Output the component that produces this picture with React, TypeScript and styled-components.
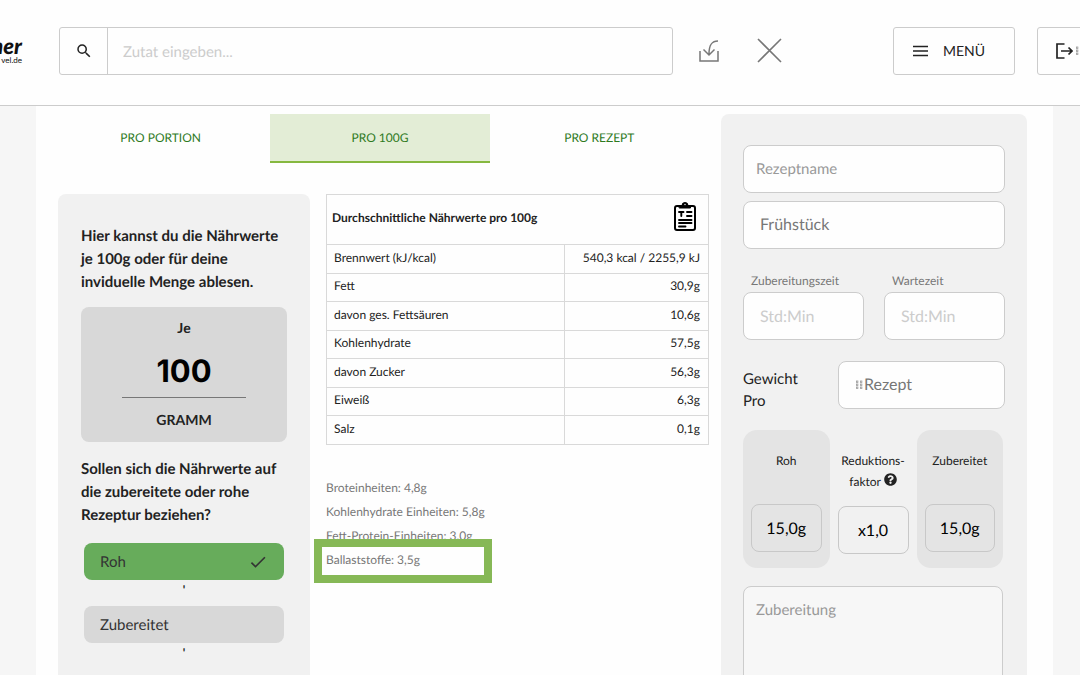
import React from "react";
import styled, { createGlobalStyle } from "styled-components";
import { MdSearch, MdCheck } from "react-icons/md";
import { FaQuestionCircle } from "react-icons/fa";

const GlobalStyle = createGlobalStyle`
  *, *::before, *::after { box-sizing: border-box; }
  body {
    margin: 0;
    background: #f6f6f6;
    color: #222;
    font: 15px/22px Lato, "Open Sans", sans-serif;
    text-rendering: geometricPrecision;
  }
  button, input, select, textarea { font: inherit; color: inherit; margin: 0; text-rendering: inherit; }
`;

const Page = styled.div`
  display: flex;
  flex-direction: column;
  height: 100vh;
  overflow: hidden;
`;

const Header = styled.header`
  display: flex;
  align-items: center;
  flex: none;
  height: 106px;
  padding-bottom: 4px;
  background: #fefefe;
  border-bottom: 1px solid #ccc;
`;

const Logo = styled.a`
  display: flex;
  flex-direction: column;
  align-items: flex-end;
  flex: none;
  width: 59px;
  padding-right: 37px;
  color: #111;
  text-decoration: none;
`;

const LogoName = styled.span`
  font-size: 22px;
  line-height: 18px;
  font-weight: 900;
  font-style: italic;
`;

const LogoDomain = styled.span`
  font-size: 8px;
  line-height: 10px;
`;

const Search = styled.form`
  display: flex;
  flex: 1;
  height: 48px;
  border: 1px solid #ccc;
  border-radius: 3px;
`;

const SearchButton = styled.button`
  display: grid;
  place-items: center;
  width: 48px;
  padding: 0;
  border: 0;
  border-right: 1px solid #ccc;
  background: none;
`;

const SearchInput = styled.input`
  flex: 1;
  min-width: 0;
  padding: 2px 15px 0;
  border: 0;
  background: none;
  &::placeholder { color: #ccc; opacity: 1; }
`;

const Actions = styled.div`
  display: flex;
  gap: 38px;
  padding: 0 111px 0 26px;
`;

const IconButton = styled.button`
  display: grid;
  place-items: center;
  padding: 0;
  border: 0;
  background: none;
  color: #777;
`;

const BoxButton = styled.button<{ $width: number; $gap: number }>`
  display: flex;
  align-items: center;
  gap: ${(p) => p.$gap}px;
  flex: none;
  width: ${(p) => p.$width}px;
  height: 48px;
  padding: 0 18px;
  border: 1px solid #ccc;
  border-radius: 3px;
  background: none;
  font-size: 14px;
`;

const HeaderButtons = styled.div`
  display: flex;
  gap: 22px;
  flex: none;
  margin-right: -37px;
`;

const Main = styled.main`
  display: flex;
  align-items: stretch;
  gap: 12px;
  flex: 1;
  margin: 0 27px 0 36px;
  padding: 8px 26px 0 15px;
  background: #fefefe;
`;

const Nutrition = styled.section`
  display: flex;
  flex-direction: column;
  flex: 1;
  min-width: 0;
`;

const Tabs = styled.div`
  display: flex;
`;

const Tab = styled.button<{ $active?: boolean }>`
  flex: 1;
  height: 49px;
  padding: 0;
  border: 0;
  border-bottom: 2px solid ${(p) => (p.$active ? "#86b840" : "transparent")};
  background: ${(p) => (p.$active ? "#e3edd6" : "none")};
  color: #2f7a1e;
  font-size: 12px;
`;

const Columns = styled.div`
  display: flex;
  gap: 16px;
  flex: 1;
  padding: 31px 0 0 7px;
`;

const Settings = styled.div`
  flex: none;
  width: 252px;
  padding: 31px 23px;
  border-radius: 8px 8px 0 0;
  background: #f1f1f1;
`;

const Question = styled.h2`
  margin: 0;
  font-size: 15px;
  line-height: 23px;
  font-weight: 700;
`;

const Amount = styled.label`
  display: flex;
  flex-direction: column;
  align-items: center;
  height: 135px;
  margin: 13px 0 16px;
  padding-top: 10px;
  border-radius: 8px;
  background: #d8d8d8;
  font-size: 14px;
  font-weight: 700;
`;

const AmountInput = styled.input`
  width: 124px;
  height: 59px;
  margin-bottom: 11px;
  padding: 6px 0 0;
  border: 0;
  border-bottom: 1px solid #777;
  background: none;
  color: #000;
  font: 700 31px Inter, sans-serif;
  text-align: center;
`;

const Options = styled.div`
  margin: 16px 3px 0;
`;

const Option = styled.label<{ $active?: boolean }>`
  display: flex;
  align-items: center;
  justify-content: space-between;
  height: 37px;
  padding: 0 16px;
  border-radius: 8px;
  background: ${(p) => (p.$active ? "#67ac5b" : "#d8d8d8")};
  color: #333;
`;

const HiddenRadio = styled.input`
  position: absolute;
  opacity: 0;
  pointer-events: none;
`;

const OptionNote = styled.div`
  height: 26px;
  font-size: 12px;
  line-height: 20px;
  font-weight: 700;
  text-align: center;
`;

const Facts = styled.div`
  flex: 1;
  min-width: 0;
`;

const FactsTable = styled.table`
  width: 100%;
  border-collapse: collapse;
  font-size: 12px;
  line-height: 16px;
  th, td { border: 1px solid #d9d9d9; }
  thead th { height: 50px; padding: 0 12px 3px 5px; text-align: left; }
  tbody th { width: 239px; padding: 0 7px 3px; font-weight: 400; text-align: left; }
  td { width: 144px; padding: 0 8px 3px; text-align: right; white-space: nowrap; }
  tbody tr { height: 28px; }
  tbody tr:nth-child(odd) { height: 29px; }
`;

const TableTitle = styled.div`
  display: flex;
  align-items: center;
  justify-content: space-between;
`;

const CopyButton = styled(IconButton)`
  color: #000;
  padding-bottom: 3px;
`;

const Units = styled.ul`
  margin: 31px 0 0;
  padding: 0;
  list-style: none;
  color: #777;
  font-size: 12px;
  line-height: 24px;
`;

const Unit = styled.li`
  position: relative;
`;

const Highlight = styled.span`
  position: absolute;
  left: -12px;
  top: -9px;
  width: 178px;
  height: 44px;
  border: 8px solid #86b856;
`;

const Recipe = styled.form`
  flex: none;
  width: 306px;
  padding: 31px 22px 0;
  border-radius: 8px 8px 0 0;
  background: #f1f1f1;
`;

const Field = styled.input`
  display: block;
  width: 100%;
  height: 48px;
  padding: 0 12px;
  border: 1px solid #ccc;
  border-radius: 8px;
  background: #fefefe;
  &::placeholder { color: #999; opacity: 1; }
`;

const SelectBox = styled.div`
  display: flex;
  align-items: center;
  flex: 1;
  height: 48px;
  padding: 0 16px;
  border: 1px solid #ccc;
  border-radius: 8px;
  background: #fefefe;
  color: #777;
`;

const Select = styled.select`
  flex: 1;
  padding: 0;
  border: 0;
  background: none;
  font-size: 16px;
  appearance: none;
`;

const Stack = styled.div`
  display: grid;
  gap: 8px;
`;

const Times = styled.div`
  display: grid;
  grid-template-columns: 1fr 1fr;
  gap: 20px;
  margin: 21px 0;
`;

const TimeLabel = styled.label`
  color: #777;
  font-size: 12px;
`;

const TimeName = styled.span`
  display: block;
  padding-left: 8px;
`;

const TimeField = styled(Field)`
  padding: 0 16px;
  font-size: 16px;
  &::placeholder { color: #ccc; }
`;

const WeightRow = styled.div`
  display: flex;
  align-items: flex-start;
  margin-bottom: 18px;
`;

const WeightLabel = styled.label`
  width: 95px;
  padding: 7px 30px 0 0;
`;

const Weights = styled.div`
  display: flex;
  gap: 8px;
  margin-right: 2px;
`;

const Weight = styled.label<{ $plain?: boolean }>`
  display: flex;
  flex-direction: column;
  align-items: center;
  flex: ${(p) => (p.$plain ? "0 0 71px" : "1")};
  min-width: 0;
  height: 138px;
  padding: 20px ${(p) => (p.$plain ? 0 : 8)}px 0;
  border-radius: 14px;
  background: ${(p) => (p.$plain ? "none" : "#e4e4e4")};
  font-size: 12px;
  line-height: 21px;
  text-align: center;
`;

const WeightName = styled.span<{ $plain?: boolean }>`
  height: ${(p) => (p.$plain ? 56 : 54)}px;
  white-space: nowrap;
`;

const WeightValue = styled.input`
  width: 100%;
  height: 48px;
  padding: 0;
  border: 1px solid #c8c8c8;
  border-radius: 8px;
  background: none;
  color: #000;
  font-size: 16px;
  text-align: center;
`;

const Preparation = styled.textarea`
  display: block;
  width: calc(100% - 2px);
  height: 200px;
  margin-top: 18px;
  padding: 12px;
  border: 1px solid #ccc;
  border-radius: 8px;
  background: #f7f7f7;
  resize: none;
  &::placeholder { color: #999; opacity: 1; }
`;

const ImportIcon = () => (
  <svg width="20" height="22" viewBox="0 0 20 22" fill="none" stroke="currentColor" strokeWidth="1.500">
    <path d="M1 11v10h18V11M19 1C12.500 1 10 5 10 14M4.500 9.500l5.500 5.500L15.500 9.500" />
  </svg>
);

const CrossIcon = () => (
  <svg width="25" height="25" viewBox="0 0 25 25" fill="none" stroke="currentColor" strokeWidth="1.600">
    <path d="M1 1l23 23M24 1L1 24" />
  </svg>
);

const MenuIcon = () => (
  <svg width="17" height="12" viewBox="0 0 17 12" stroke="currentColor" strokeWidth="1.500">
    <path d="M1 1.500h15M1 6h15M1 10.500h15" />
  </svg>
);

const LogoutIcon = () => (
  <svg width="17" height="16" viewBox="0 0 17 16" fill="none" stroke="currentColor" strokeWidth="1.700">
    <path d="M8.500 1H1v14h7.500M5 8h11M12.500 4.500L16 8l-3.500 3.500" />
  </svg>
);

const DotsIcon = () => (
  <svg width="9" height="10" viewBox="0 0 9 10" fill="none" stroke="#999" strokeWidth="0.800">
    {[1, 4, 7].map((y) => (
      <React.Fragment key={y}>
        <rect x="1.500" y={y} width="1.400" height="1.400" />
        <rect x="5.500" y={y} width="1.400" height="1.400" />
      </React.Fragment>
    ))}
  </svg>
);

const ClipboardIcon = () => (
  <svg width="22" height="29" viewBox="0 0 22 29" fill="none" stroke="currentColor" strokeLinecap="round">
    <rect x="1" y="4" width="20" height="24" rx="2" strokeWidth="2" />
    <path d="M5.500 3.500h2.500a3 3 0 0 1 6 0h2.500v2.500h-11z" fill="currentColor" strokeWidth="1" />
    <circle cx="11" cy="2.500" r="0.700" fill="#fff" stroke="none" />
    <path d="M5 10h4.500M7.300 10v4M13 10h4.500M13 14h4.500M5 18h12.500M5 21h12.500M5 24.500h6.500" strokeWidth="1.900" />
  </svg>
);

const rows = [
  ["Brennwert (kJ/kcal)", "540,3 kcal / 2255,9 kJ"],
  ["Fett", "30,9g"],
  ["davon ges. Fettsäuren", "10,6g"],
  ["Kohlenhydrate", "57,5g"],
  ["davon Zucker", "56,3g"],
  ["Eiweiß", "6,3g"],
  ["Salz", "0,1g"],
];

export default function App() {
  return (
    <Page>
      <GlobalStyle />
      <Header>
        <Logo href="#">
          <LogoName>ner</LogoName>
          <LogoDomain>vel.de</LogoDomain>
        </Logo>
        <Search>
          <SearchButton type="button" aria-label="Suchen"><MdSearch size={18} /></SearchButton>
          <SearchInput aria-label="Zutat" placeholder="Zutat eingeben..." />
        </Search>
        <Actions>
          <IconButton aria-label="Importieren"><ImportIcon /></IconButton>
          <IconButton aria-label="Leeren"><CrossIcon /></IconButton>
        </Actions>
        <HeaderButtons>
          <BoxButton $width={122} $gap={14}><MenuIcon />MENÜ</BoxButton>
          <BoxButton $width={80} $gap={2} aria-label="Abmelden">
            <LogoutIcon />
            <DotsIcon />
          </BoxButton>
        </HeaderButtons>
      </Header>
      <Main>
        <Nutrition>
          <Tabs role="tablist">
            <Tab role="tab">PRO PORTION</Tab>
            <Tab role="tab" aria-selected $active>PRO 100G</Tab>
            <Tab role="tab">PRO REZEPT</Tab>
          </Tabs>
          <Columns>
            <Settings>
              <Question>Hier kannst du die Nährwerte je 100g oder für deine inviduelle Menge ablesen.</Question>
              <Amount>
                Je
                <AmountInput defaultValue="100" />
                GRAMM
              </Amount>
              <Question>Sollen sich die Nährwerte auf die zubereitete oder rohe Rezeptur beziehen?</Question>
              <Options>
                <Option $active>
                  <HiddenRadio type="radio" name="state" defaultChecked />
                  Roh
                  <MdCheck size={20} />
                </Option>
                <OptionNote>'</OptionNote>
                <Option>
                  <HiddenRadio type="radio" name="state" />
                  Zubereitet
                </Option>
                <OptionNote>'</OptionNote>
              </Options>
            </Settings>
            <Facts>
              <FactsTable>
                <thead>
                  <tr>
                    <th colSpan={2}>
                      <TableTitle>
                        Durchschnittliche Nährwerte pro 100g
                        <CopyButton aria-label="Kopieren"><ClipboardIcon /></CopyButton>
                      </TableTitle>
                    </th>
                  </tr>
                </thead>
                <tbody>
                  {rows.map(([name, value]) => (
                    <tr key={name}>
                      <th scope="row">{name}</th>
                      <td>{value}</td>
                    </tr>
                  ))}
                </tbody>
              </FactsTable>
              <Units>
                <Unit>Broteinheiten: 4,8g</Unit>
                <Unit>Kohlenhydrate Einheiten: 5,8g</Unit>
                <Unit>Fett-Protein-Einheiten: 3,0g</Unit>
                <Unit>Ballaststoffe: 3,5g<Highlight /></Unit>
              </Units>
            </Facts>
          </Columns>
        </Nutrition>
        <Recipe>
          <Stack>
            <Field aria-label="Rezeptname" placeholder="Rezeptname" />
            <SelectBox>
              <Select aria-label="Mahlzeit"><option>Frühstück</option></Select>
            </SelectBox>
          </Stack>
          <Times>
            <TimeLabel><TimeName>Zubereitungszeit</TimeName><TimeField placeholder="Std:Min" /></TimeLabel>
            <TimeLabel><TimeName>Wartezeit</TimeName><TimeField placeholder="Std:Min" /></TimeLabel>
          </Times>
          <WeightRow>
            <WeightLabel htmlFor="per">Gewicht Pro</WeightLabel>
            <SelectBox>
              <DotsIcon />
              <Select id="per"><option>Rezept</option></Select>
            </SelectBox>
          </WeightRow>
          <Weights>
            <Weight>
              <WeightName>Roh</WeightName>
              <WeightValue defaultValue="15,0g" />
            </Weight>
            <Weight $plain>
              <WeightName $plain>Reduktions-<br />faktor <FaQuestionCircle size={13} /></WeightName>
              <WeightValue defaultValue="x1,0" />
            </Weight>
            <Weight>
              <WeightName>Zubereitet</WeightName>
              <WeightValue defaultValue="15,0g" />
            </Weight>
          </Weights>
          <Preparation aria-label="Zubereitung" placeholder="Zubereitung" />
        </Recipe>
      </Main>
    </Page>
  );
}
